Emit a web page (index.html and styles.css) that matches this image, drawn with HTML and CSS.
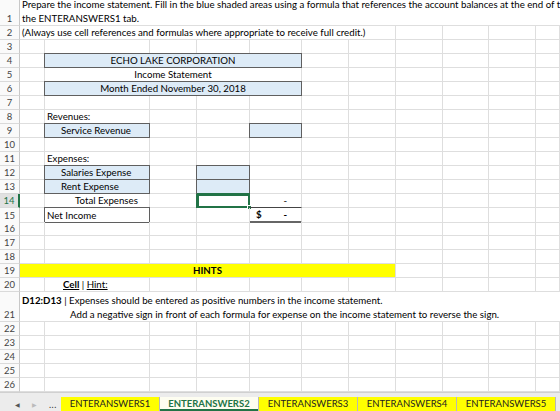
FILE: index.html
```html
<!DOCTYPE html>
<html>
<head>
<meta charset="utf-8">
<link rel="stylesheet" href="styles.css">
</head>
<body>
<div class="sheet">
  <div class="row r26">
    <div class="h">1</div>
    <div class="c span-all wrap2">
      <div class="ln">Prepare the income statement. Fill in the blue shaded areas using a formula that references the account balances at the end of the month on</div>
      <div class="ln">the ENTERANSWERS1 tab.</div>
    </div>
  </div>
  <div class="row">
    <div class="h">2</div>
    <div class="c a-g">(Always use cell references and formulas where appropriate to receive full credit.)</div>
    <div class="c"></div><div class="c"></div><div class="c"></div><div class="c"></div>
  </div>
  <div class="row">
    <div class="h">3</div>
    <div class="c"></div><div class="c"></div><div class="c"></div><div class="c"></div><div class="c"></div><div class="c"></div><div class="c"></div><div class="c"></div><div class="c"></div><div class="c"></div><div class="c"></div>
  </div>
  <div class="row">
    <div class="h">4</div>
    <div class="c"></div>
    <div class="c b-e box blue center">ECHO LAKE CORPORATION</div>
    <div class="c"></div><div class="c"></div><div class="c"></div><div class="c"></div><div class="c"></div><div class="c"></div>
  </div>
  <div class="row">
    <div class="h">5</div>
    <div class="c"></div>
    <div class="c b-e center">Income Statement</div>
    <div class="c"></div><div class="c"></div><div class="c"></div><div class="c"></div><div class="c"></div><div class="c"></div>
  </div>
  <div class="row">
    <div class="h">6</div>
    <div class="c"></div>
    <div class="c b-e box blue center">Month Ended November 30, 2018</div>
    <div class="c"></div><div class="c"></div><div class="c"></div><div class="c"></div><div class="c"></div><div class="c"></div>
  </div>
  <div class="row">
    <div class="h">7</div>
    <div class="c"></div><div class="c"></div><div class="c"></div><div class="c"></div><div class="c"></div><div class="c"></div><div class="c"></div><div class="c"></div><div class="c"></div><div class="c"></div><div class="c"></div>
  </div>
  <div class="row">
    <div class="h">8</div>
    <div class="c"></div><div class="c">Revenues:</div><div class="c"></div><div class="c"></div><div class="c"></div><div class="c"></div><div class="c"></div><div class="c"></div><div class="c"></div><div class="c"></div><div class="c"></div>
  </div>
  <div class="row">
    <div class="h">9</div>
    <div class="c"></div><div class="c box blue ind1">Service Revenue</div><div class="c"></div><div class="c"></div><div class="c box blue"></div><div class="c"></div><div class="c"></div><div class="c"></div><div class="c"></div><div class="c"></div><div class="c"></div>
  </div>
  <div class="row">
    <div class="h">10</div>
    <div class="c"></div><div class="c"></div><div class="c"></div><div class="c"></div><div class="c"></div><div class="c"></div><div class="c"></div><div class="c"></div><div class="c"></div><div class="c"></div><div class="c"></div>
  </div>
  <div class="row">
    <div class="h">11</div>
    <div class="c"></div><div class="c">Expenses:</div><div class="c"></div><div class="c"></div><div class="c"></div><div class="c"></div><div class="c"></div><div class="c"></div><div class="c"></div><div class="c"></div><div class="c"></div>
  </div>
  <div class="row">
    <div class="h">12</div>
    <div class="c"></div><div class="c box blue ind1">Salaries Expense</div><div class="c"></div><div class="c box blue"></div><div class="c"></div><div class="c"></div><div class="c"></div><div class="c"></div><div class="c"></div><div class="c"></div><div class="c"></div>
  </div>
  <div class="row">
    <div class="h">13</div>
    <div class="c"></div><div class="c box blue ind1">Rent Expense</div><div class="c"></div><div class="c box blue"></div><div class="c"></div><div class="c"></div><div class="c"></div><div class="c"></div><div class="c"></div><div class="c"></div><div class="c"></div>
  </div>
  <div class="row">
    <div class="h active">14</div>
    <div class="c"></div><div class="c ind2">Total Expenses</div><div class="c"></div>
    <div class="c sel"><span class="handle"></span></div>
    <div class="c acct under"><span></span><span class="dash">-</span></div>
    <div class="c"></div><div class="c"></div><div class="c"></div><div class="c"></div><div class="c"></div><div class="c"></div>
  </div>
  <div class="row">
    <div class="h">15</div>
    <div class="c"></div><div class="c box">Net Income</div><div class="c"></div><div class="c"></div>
    <div class="c acct bold dbl"><span>$</span><span class="dash">-</span></div>
    <div class="c"></div><div class="c"></div><div class="c"></div><div class="c"></div><div class="c"></div><div class="c"></div>
  </div>
  <div class="row">
    <div class="h">16</div>
    <div class="c"></div><div class="c"></div><div class="c"></div><div class="c"></div><div class="c"></div><div class="c"></div><div class="c"></div><div class="c"></div><div class="c"></div><div class="c"></div><div class="c"></div>
  </div>
  <div class="row">
    <div class="h">17</div>
    <div class="c"></div><div class="c"></div><div class="c"></div><div class="c"></div><div class="c"></div><div class="c"></div><div class="c"></div><div class="c"></div><div class="c"></div><div class="c"></div><div class="c"></div>
  </div>
  <div class="row">
    <div class="h">18</div>
    <div class="c"></div><div class="c"></div><div class="c"></div><div class="c"></div><div class="c"></div><div class="c"></div><div class="c"></div><div class="c"></div><div class="c"></div><div class="c"></div><div class="c"></div>
  </div>
  <div class="row">
    <div class="h">19</div>
    <div class="c a-g yellow center bold">HINTS</div>
    <div class="c"></div><div class="c"></div><div class="c"></div><div class="c"></div>
  </div>
  <div class="row">
    <div class="h">20</div>
    <div class="c"></div><div class="c hintcol"><span class="bold u">Cell</span>&nbsp;|&nbsp;<span class="u">Hint:</span></div><div class="c"></div><div class="c"></div><div class="c"></div><div class="c"></div><div class="c"></div><div class="c"></div><div class="c"></div><div class="c"></div><div class="c"></div>
  </div>
  <div class="row r29">
    <div class="h">21</div>
    <div class="c span-all wrap2">
      <div class="ln"><span class="bold">D12:D13</span> | Expenses should be entered as positive numbers in the income statement.</div>
      <div class="ln ind3">Add a negative sign in front of each formula for expense on the income statement to reverse the sign.</div>
    </div>
  </div>
  <div class="row">
    <div class="h">22</div>
    <div class="c"></div><div class="c"></div><div class="c"></div><div class="c"></div><div class="c"></div><div class="c"></div><div class="c"></div><div class="c"></div><div class="c"></div><div class="c"></div><div class="c"></div>
  </div>
  <div class="row">
    <div class="h">23</div>
    <div class="c"></div><div class="c"></div><div class="c"></div><div class="c"></div><div class="c"></div><div class="c"></div><div class="c"></div><div class="c"></div><div class="c"></div><div class="c"></div><div class="c"></div>
  </div>
  <div class="row">
    <div class="h">24</div>
    <div class="c"></div><div class="c"></div><div class="c"></div><div class="c"></div><div class="c"></div><div class="c"></div><div class="c"></div><div class="c"></div><div class="c"></div><div class="c"></div><div class="c"></div>
  </div>
  <div class="row">
    <div class="h">25</div>
    <div class="c"></div><div class="c"></div><div class="c"></div><div class="c"></div><div class="c"></div><div class="c"></div><div class="c"></div><div class="c"></div><div class="c"></div><div class="c"></div><div class="c"></div>
  </div>
  <div class="row">
    <div class="h">26</div>
    <div class="c"></div><div class="c"></div><div class="c"></div><div class="c"></div><div class="c"></div><div class="c"></div><div class="c"></div><div class="c"></div><div class="c"></div><div class="c"></div><div class="c"></div>
  </div>
</div>
<div class="tabbar">
  <div class="nav">
    <span class="arr">&#9664;</span>
    <span class="arr dim">&#9654;</span>
    <span class="dots">...</span>
  </div>
  <div class="tab">ENTERANSWERS1</div>
  <div class="tab on">ENTERANSWERS2</div>
  <div class="tab">ENTERANSWERS3</div>
  <div class="tab">ENTERANSWERS4</div>
  <div class="tab">ENTERANSWERS5</div>
  <div class="rest"></div>
</div>
</body>
</html>
```
FILE: styles.css
```css
html, body {
  margin: 0;
  padding: 0;
  background: #fff;
  overflow: hidden;
}
body {
  width: 560px;
  height: 411px;
  font-family: "Lato", "Liberation Sans", sans-serif;
  font-size: 9.7px;
  color: #000;
}
.sheet {
  height: 392px;
  overflow: hidden;
}
.row {
  display: grid;
  grid-template-columns: 20px 25px 105px 47px 53px 52px 47px 47px 47px 46px 47px 1fr;
  height: 14px;
}
.row.r26 { height: 26px; }
.row.r29 { height: 30px; }
.h {
  box-sizing: border-box;
  background: #fafafa;
  border-right: 1px solid #c8c8c8;
  border-bottom: 1px solid #dadada;
  color: #444;
  display: flex;
  align-items: flex-end;
  justify-content: center;
  line-height: 13px;
  font-size: 9.5px;
}
.h.active {
  background: #e1e1e1;
  color: #217346;
  border-right: 2px solid #217346;
}
.c {
  box-sizing: border-box;
  border-right: 1px solid #dedede;
  border-bottom: 1px solid #dedede;
  white-space: nowrap;
  display: flex;
  align-items: flex-end;
  line-height: 13px;
  padding-left: 2px;
  position: relative;
}
.span-all { grid-column: 2 / -1; border-right: none; }
.a-g { grid-column: 2 / 9; }
.b-e { grid-column: 3 / 7; }
.center { justify-content: center; padding-left: 0; }
.blue { background: #ddebf7; }
.yellow { background: #ffff00; }
.box {
  border-right-color: #5f5f5f;
  border-bottom-color: #5f5f5f;
  box-shadow: -1px 0 0 #5f5f5f, 0 -1px 0 #5f5f5f, -1px -1px 0 #5f5f5f;
}
.ind1 { padding-left: 16px; }
.ind2 { padding-left: 30px; }
.hintcol { padding-left: 18px; }
.bold { font-weight: bold; }
.u { text-decoration: underline; }
.wrap2 {
  flex-direction: column;
  justify-content: flex-end;
  align-items: flex-start;
  overflow: hidden;
}
.ln { line-height: 14px; }
.ind3 { padding-left: 48px; }
.sel {
  border: 2px solid #217346;
  box-shadow: -1px 0 0 #217346, 0 -1px 0 #217346;
}
.handle {
  position: absolute;
  right: -4px;
  bottom: -4px;
  width: 5px;
  height: 5px;
  background: #217346;
  border: 1px solid #fff;
  box-sizing: border-box;
}
.acct {
  justify-content: space-between;
  padding-left: 6px;
  padding-right: 14px;
}
.dbl .dash { font-weight: bold; }
.under { border-bottom-color: #444; }
.dbl { border-bottom: 2px solid #666; }
.tabbar {
  height: 19px;
  background: #ececec;
  border-top: 1px solid #d0d0d0;
  display: flex;
  align-items: flex-end;
  box-sizing: border-box;
  font-size: 9.5px;
}
.nav {
  width: 61px;
  height: 14px;
  display: flex;
  align-items: center;
  box-sizing: border-box;
  padding-left: 15px;
  gap: 12px;
  color: #555;
}
.arr { font-size: 6px; }
.arr.dim { color: #bbb; }
.dots { font-size: 9px; color: #333; letter-spacing: 0.5px; }
.tab {
  width: 98px;
  height: 14px;
  background: #ffff00;
  border-right: 1px solid #b8b8b8;
  display: flex;
  align-items: center;
  justify-content: center;
  color: #222;
  line-height: 14px;
}
.tab.on {
  background: #fdfdf0;
  color: #217346;
  font-weight: bold;
  box-shadow: inset 0 -2px 0 #217346;
}
.rest {
  flex: 1;
  height: 14px;
  background: #ececec;
}
```
